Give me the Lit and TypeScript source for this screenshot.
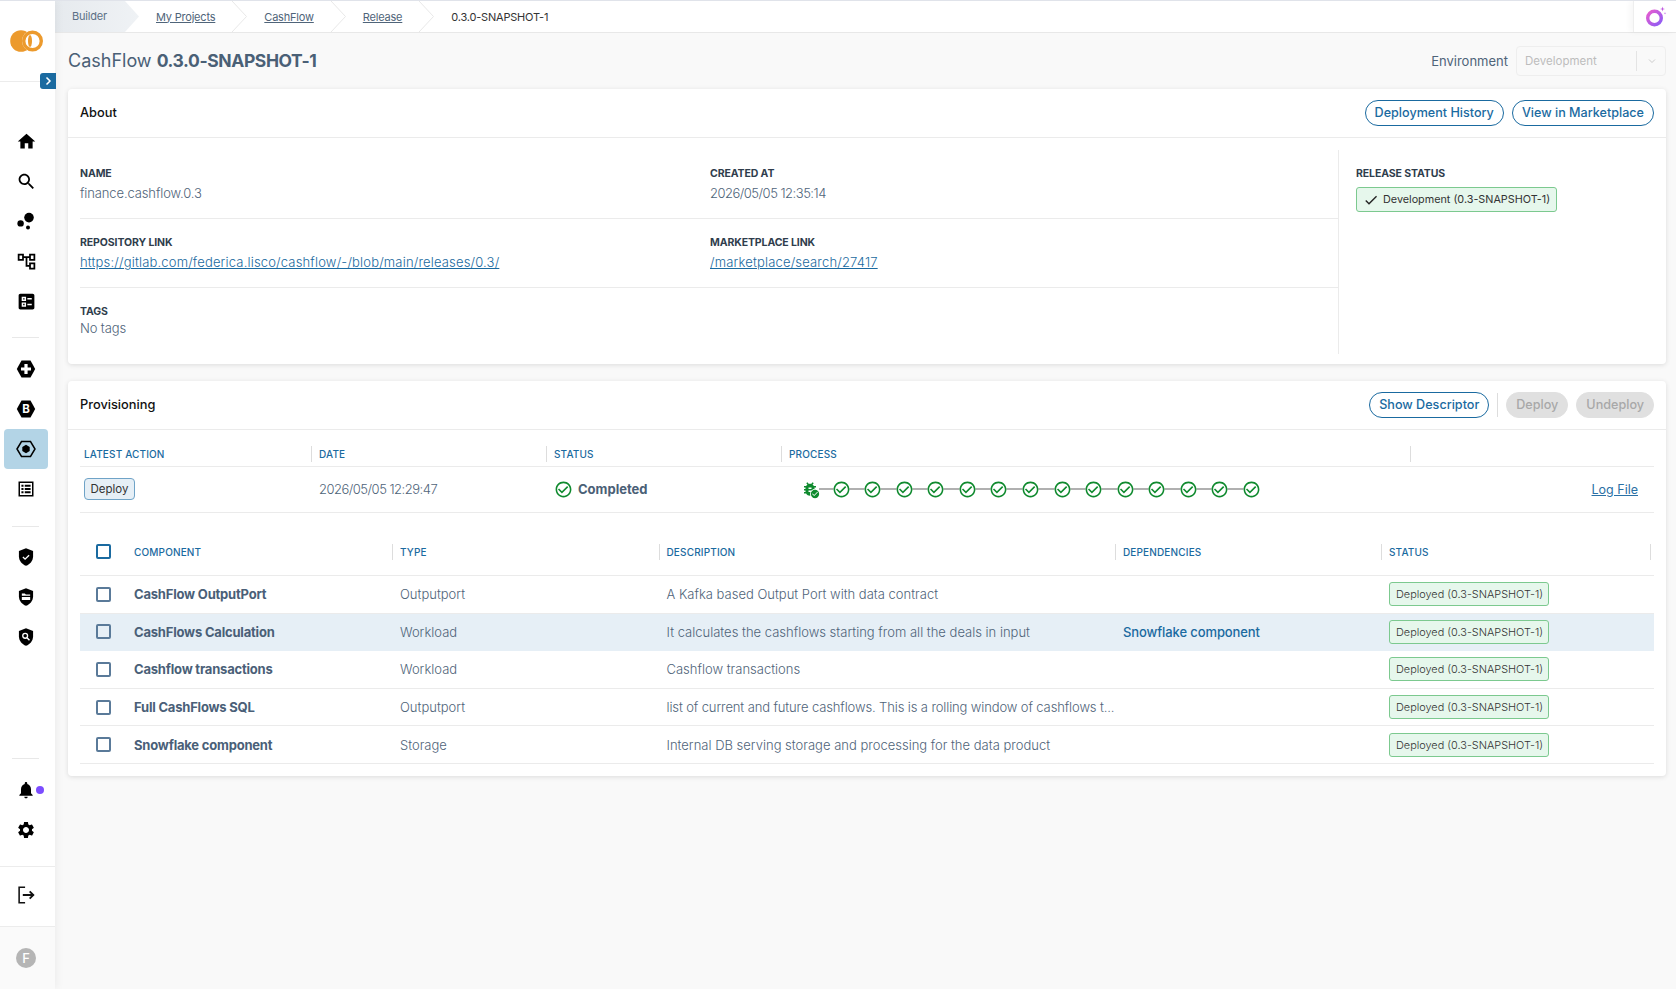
import { LitElement, html, css, svg } from 'lit';
import { customElement } from 'lit/decorators.js';

const CHECK_CIRCLE =
  'M16.59 7.58 10 14.17l-3.59-3.58L5 12l5 5 8-8zM12 2C6.48 2 2 6.48 2 12s4.48 10 10 10 10-4.48 10-10S17.52 2 12 2zm0 18c-4.42 0-8-3.58-8-8s3.58-8 8-8 8 3.58 8 8-3.58 8-8 8z';
const BUG =
  'M20 8h-2.81c-.45-.78-1.07-1.45-1.82-1.96L17 4.41 15.59 3l-2.17 2.17C12.96 5.06 12.49 5 12 5c-.49 0-.96.06-1.41.17L8.41 3 7 4.41l1.62 1.63C7.88 6.55 7.26 7.22 6.81 8H4v2h2.09c-.05.33-.09.66-.09 1v1H4v2h2v1c0 .34.04.67.09 1H4v2h2.81c1.04 1.79 2.97 3 5.19 3s4.15-1.21 5.19-3H20v-2h-2.09c.05-.33.09-.66.09-1v-1h2v-2h-2v-1c0-.34-.04-.67-.09-1H20V8zm-6 8h-4v-2h4v2zm0-4h-4v-2h4v2z';
const SHIELD = 'M12 1.5 3.5 4.8v6.4c0 5.2 3.6 10 8.5 11.3 4.9-1.3 8.5-6.1 8.5-11.3V4.8z';
const HEX = '2.8,12 7.5,3.6 16.5,3.6 21.2,12 16.5,20.4 7.5,20.4';

const icon = (body: unknown, size = 24) =>
  html`<svg width=${size} height=${size} viewBox="0 0 24 24" fill="currentColor">${body}</svg>`;

const NAV_TOP = [
  { size: 21, body: svg`<path d="M10 20v-6h4v6h5v-8h3L12 3 2 12h3v8z"/>` },
  { size: 21, body: svg`<path d="M15.5 14h-.79l-.28-.27C15.41 12.59 16 11.11 16 9.5 16 5.91 13.09 3 9.5 3S3 5.91 3 9.5 5.91 16 9.5 16c1.61 0 3.09-.59 4.23-1.57l.27.28v.79l5 4.99L20.49 19l-4.99-5zm-6 0C7.01 14 5 11.99 5 9.5S7.01 5 9.5 5 14 7.01 14 9.5 11.99 14 9.5 14z"/>` },
  { size: 24, body: svg`<circle cx="6.6" cy="14.4" r="3.2"/><circle cx="14" cy="18.4" r="2"/><circle cx="15" cy="8.6" r="4.8"/>` },
  { size: 21, body: svg`<path d="M22 11V3h-7v3H9V3H2v8h7V8h2v10h4v3h7v-8h-7v3h-2V8h2v3h7zM7 9H4V5h3v4zm10 6h3v4h-3v-4zm0-10h3v4h-3V5z"/>` },
  { size: 21, body: svg`<path fill-rule="evenodd" d="M5 3h14c1.1 0 2 .9 2 2v14c0 1.1-.9 2-2 2H5c-1.100 0-2-.9-2-2V5c0-1.100.9-2 2-2zm1.500 3.500v5h5v-5zm1.700 1.700h1.600v1.600H8.200zM6.500 13v5h5v-5zm1.700 1.700h1.600v1.600H8.200zM13 8v1.700h5V8zm0 6.500v1.700h5v-1.700z"/>` },
];

const NAV_MID = [
  { size: 24, body: svg`<polygon points=${HEX}/><path fill="#fff" d="M10.400 7h3.200v3.400H17v3.200h-3.400V17h-3.200v-3.400H7v-3.200h3.400z"/>` },
  { size: 24, body: svg`<polygon points=${HEX}/><text x="12" y="16" text-anchor="middle" font-size="11.500" font-weight="700" fill="#fff" font-family="Inter, sans-serif">B</text>` },
  { size: 24, body: svg`<polygon points="3,12 7.500,4.600 16.500,4.600 21,12 16.500,19.400 7.500,19.400" fill="none" stroke="currentColor" stroke-width="1.500"/><polygon points="12,7.800 15.700,9.900 15.700,14.100 12,16.200 8.300,14.100 8.300,9.900"/>` },
  { size: 20, body: svg`<path fill-rule="evenodd" d="M3 3h18v18H3zm1.800 1.800v14.400h14.400V4.800zM6.500 7h2.500v2.300H6.500zm4 0h7v2.300h-7zm-4 3.900h2.500v2.300H6.500zm4 0h7v2.300h-7zm-4 3.900h2.500V17H6.500zm4 0h7V17h-7z"/>` },
];

const NAV_SHIELDS = [
  svg`<path d=${SHIELD}/><path d="m8.300 12 2.600 2.600 4.800-4.800" fill="none" stroke="#fff" stroke-width="1.600"/>`,
  svg`<path d=${SHIELD}/><path fill="#fff" d="M7 7.800h3.600l1.200 1.300H17v1.300H7zM7 12h10v3.600H7z"/>`,
  svg`<path d=${SHIELD}/><circle cx="11" cy="10.600" r="2.900" fill="none" stroke="#fff" stroke-width="1.600"/><path d="m13.200 12.800 3 3" stroke="#fff" stroke-width="1.800"/>`,
];

const CRUMBS = ['My Projects', 'CashFlow', 'Release'];

const COMPONENTS = [
  { name: 'CashFlow OutputPort', type: 'Outputport', desc: 'A Kafka based Output Port with data contract', dep: '' },
  { name: 'CashFlows Calculation', type: 'Workload', desc: 'It calculates the cashflows starting from all the deals in input', dep: 'Snowflake component', active: true },
  { name: 'Cashflow transactions', type: 'Workload', desc: 'Cashflow transactions', dep: '' },
  { name: 'Full CashFlows SQL', type: 'Outputport', desc: 'list of current and future cashflows. This is a rolling window of cashflows t...', dep: '', long: true },
  { name: 'Snowflake component', type: 'Storage', desc: 'Internal DB serving storage and processing for the data product', dep: '' },
];

@customElement('app-root')
export class AppRoot extends LitElement {
  static styles = css`
    :host {
      display: flex;
      height: 989px;
      overflow: hidden;
      box-sizing: border-box;
      border-top: 1px solid #e0e3ea;
      background: #f9f9f9;
      font-family: Inter, 'Noto Sans', sans-serif;
      font-size: 13px;
      color: #4f6479;
    }
    * {
      box-sizing: border-box;
    }
    a {
      color: inherit;
    }
    svg {
      display: block;
      flex: none;
    }

    /* sidebar */
    .side {
      position: relative;
      z-index: 2;
      flex: 0 0 55px;
      display: flex;
      flex-direction: column;
      background: #fff;
      box-shadow: 2px 0 8px rgba(0, 0, 0, 0.05);
      color: #000;
    }
    .logo {
      height: 81px;
      flex: none;
      display: flex;
      align-items: center;
      padding: 0 0 0 10px;
      border-bottom: 1px solid #ececec;
    }
    .expand {
      position: absolute;
      top: 72px;
      left: 40px;
      width: 16px;
      height: 16px;
      border-radius: 3px 0 0 3px;
      background: #1a6aa0;
      display: flex;
      align-items: center;
      justify-content: center;
    }
    .nav-list {
      padding-top: 39px;
    }
    .nav {
      width: 44px;
      height: 40px;
      margin-left: 4px;
      border-radius: 4px;
      display: flex;
      align-items: center;
      justify-content: center;
    }
    .nav.on {
      background: #b3d4e6;
    }
    .sep {
      height: 1px;
      width: 27px;
      margin-left: 12px;
      background: #e8e8e8;
    }
    .sep.a {
      margin-top: 16px;
      margin-bottom: 11px;
    }
    .sep.b {
      margin-top: 17px;
      margin-bottom: 10px;
    }
    .sep.c {
      margin-bottom: 11px;
    }
    .side-bottom {
      margin-top: auto;
    }
    .bell {
      position: relative;
    }
    .dot {
      position: absolute;
      left: 32px;
      top: 16px;
      width: 8px;
      height: 8px;
      border-radius: 50%;
      background: #7c4dff;
    }
    .logout {
      height: 61px;
      margin-top: 16px;
      border-top: 1px solid #ececec;
      border-bottom: 1px solid #ececec;
      display: flex;
      align-items: center;
      justify-content: center;
      padding: 0 3px 4px 0;
    }
    .foot {
      height: 62px;
      background: #fafafa;
      display: flex;
      align-items: center;
      justify-content: center;
      padding-right: 3px;
    }
    .avatar {
      width: 20px;
      height: 20px;
      border-radius: 50%;
      background: #b5b5b5;
      color: #fff;
      font-size: 13px;
      font-weight: 500;
      line-height: 20px;
      text-align: center;
    }

    /* breadcrumb */
    .main {
      flex: 1;
      min-width: 0;
    }
    .crumbs {
      height: 32px;
      background: #fff;
      border-bottom: 1px solid #e8e8e8;
      display: flex;
      align-items: center;
      font-size: 11px;
      letter-spacing: -0.2px;
    }
    .crumb-first {
      width: 84px;
      height: 100%;
      padding: 0 0 0 17px;
      line-height: 31px;
      background: linear-gradient(90deg, #e6eaee, #eff2f5);
      clip-path: polygon(0 0, 70px 0, 84px 50%, 70px 100%, 0 100%);
      color: #5b7086;
    }
    .crumb {
      padding: 0 17px;
      white-space: nowrap;
    }
    .crumb.last {
      color: #333;
    }
    .ai {
      margin-left: auto;
      width: 43px;
      height: 100%;
      border-left: 1px solid #eee;
      box-shadow: -3px 0 6px rgba(0, 0, 0, 0.04);
      display: flex;
      align-items: center;
      justify-content: center;
    }

    /* content */
    .content {
      padding: 0 10px 0 13px;
    }
    .title-row {
      height: 56px;
      display: flex;
      align-items: center;
    }
    h1 {
      margin: 0 0 2px;
      font-size: 18px;
      font-weight: 400;
      color: #4a6076;
    }
    h1 b {
      font-size: 17.500px;
      font-weight: 700;
      letter-spacing: -0.4px;
    }
    .env {
      margin-left: auto;
      display: flex;
      align-items: center;
      gap: 8px;
      font-size: 13px;
    }
    .select {
      width: 150px;
      height: 30px;
      border: 1px solid #eee;
      border-radius: 4px;
      display: flex;
      align-items: center;
      padding-left: 8px;
      font-size: 11.500px;
      color: #bdbdbd;
    }
    .select span {
      flex: 1;
    }
    .select i {
      width: 1px;
      height: 20px;
      background: #e4e4e4;
    }
    .select svg {
      margin: 0 8px 0 10px;
    }
    .card {
      background: #fff;
      border-radius: 4px;
      box-shadow: 0 1px 5px rgba(0, 0, 0, 0.12);
      margin-bottom: 17px;
    }
    .card-head {
      height: 49px;
      padding: 0 12px 1px;
      border-bottom: 1px solid #ebebeb;
      display: flex;
      align-items: center;
      gap: 8px;
      color: #111;
      font-size: 12.800px;
      font-weight: 500;
    }
    .card-head .spacer {
      flex: 1;
    }
    .btn {
      height: 26px;
      padding: 0 9px;
      border: 1px solid #1a6aa0;
      border-radius: 13px;
      color: #1a6aa0;
      font-size: 12.600px;
      font-weight: 500;
      line-height: 24px;
      white-space: nowrap;
    }
    .btn.off {
      border-color: #e0e0e0;
      background: #e0e0e0;
      color: #a8a8a8;
    }
    .vbar {
      width: 1px;
      height: 24px;
      background: #ddd;
    }

    /* about */
    .about {
      display: grid;
      grid-template-columns: 1259px 1fr;
      padding: 12px 12px 10px;
    }
    .about-left {
      border-right: 1px solid #ebebeb;
    }
    .about-row {
      height: 69px;
      display: grid;
      grid-template-columns: 630px 1fr;
      padding-top: 16px;
      border-bottom: 1px solid #ebebeb;
    }
    .about-row.last {
      height: 66px;
      border-bottom: 0;
    }
    .label {
      font-size: 10.500px;
      line-height: 16px;
      font-weight: 700;
      letter-spacing: -0.1px;
      color: #2f3d4c;
    }
    .value {
      margin-top: 1px;
      line-height: 20px;
      font-weight: 300;
      letter-spacing: -0.12px;
    }
    .value.date-val {
      letter-spacing: -0.5px;
    }
    .about-row.last .value {
      margin-top: -2px;
    }
    .value a {
      color: #1a6aa0;
      letter-spacing: 0.17px;
    }
    .about-right {
      padding: 16px 0 0 17px;
    }
    .status-chip {
      display: flex;
      align-items: center;
      gap: 4px;
      margin-top: 5px;
      height: 25px;
      width: 201px;
      padding-left: 6px;
      border: 1px solid #7cc98f;
      border-radius: 3px;
      background: #e6f7ec;
      color: #333;
      font-size: 10.800px;
      white-space: nowrap;
    }

    /* tables */
    .prov {
      padding: 0 12px 12px;
    }
    .t1 {
      display: grid;
      grid-template-columns: 231px 235px 235px 629px 244px;
      align-items: center;
    }
    .t1.h {
      height: 37px;
      padding-top: 11px;
      border-bottom: 1px solid #ebebeb;
    }
    .t1.r {
      height: 46px;
      padding-bottom: 1px;
      border-bottom: 1px solid #ebebeb;
    }
    .hc {
      height: 16px;
      line-height: 16px;
      padding-left: 7px;
      border-left: 1px solid #ddd;
      color: #1a6aa0;
      font-size: 10px;
      font-weight: 500;
      letter-spacing: 0.15px;
    }
    .hc.first {
      padding-left: 4px;
      border-left: 0;
    }
    .action {
      margin-left: 4px;
      width: 51px;
      height: 22px;
      border: 1px solid #6fa3c7;
      border-radius: 4px;
      background: #e6eff6;
      color: #333;
      font-size: 11.500px;
      line-height: 20px;
      text-align: center;
    }
    .done {
      display: flex;
      align-items: center;
      gap: 5px;
      padding-left: 8px;
      font-weight: 700;
      color: #4a6076;
    }
    .date {
      padding-left: 8px;
      font-weight: 300;
      letter-spacing: -0.5px;
    }
    .process {
      display: flex;
      align-items: center;
      justify-content: space-between;
      width: 460px;
      margin-left: 20px;
      position: relative;
    }
    .process::before {
      content: '';
      position: absolute;
      left: 18px;
      right: 8px;
      top: 50%;
      height: 2px;
      margin-top: -1px;
      background: #b0b0b0;
    }
    .process svg {
      position: relative;
    }
    .bug {
      position: relative;
      width: 18px;
      height: 18px;
    }
    .bug svg + svg {
      position: absolute;
      right: -1px;
      bottom: -1px;
      background: #fff;
      border-radius: 50%;
    }
    .log {
      text-align: right;
      padding-right: 16px;
      font-size: 12.500px;
      color: #2a70a5;
    }
    .t2 {
      display: grid;
      grid-template-columns: 312px 266.500px 456.500px 266px 273px;
      align-items: center;
    }
    .t2.h {
      height: 48px;
      margin-top: 15px;
      border-bottom: 1px solid #ebebeb;
    }
    .t2.r {
      height: 37.600px;
      border-bottom: 1px solid #ebebeb;
      font-weight: 300;
    }
    .t2.r.active {
      background: #e6eff6;
      border-bottom-color: #e6eff6;
    }
    .t2 .name {
      display: flex;
      align-items: center;
      gap: 23px;
      padding-left: 16px;
    }
    .t2 .name b {
      font-weight: 700;
      letter-spacing: -0.2px;
      color: #4a5f78;
    }
    .hc.name {
      height: auto;
      padding-left: 16px;
      border-left: 0;
    }
    .hc.end {
      margin-right: 3px;
      border-right: 1px solid #ddd;
    }
    .box {
      flex: none;
      width: 15px;
      height: 15px;
      border: 2px solid #5a7a99;
      border-radius: 2px;
    }
    .box.head {
      border-color: #1a6aa0;
    }
    .cell {
      padding-left: 8px;
      white-space: nowrap;
    }
    .cell.long {
      letter-spacing: -0.12px;
    }
    .cell.dep {
      color: #1a6aa0;
      font-weight: 500;
      letter-spacing: -0.1px;
    }
    .chip {
      margin-left: 8px;
      width: 160px;
      height: 24px;
      border: 1px solid #7cc98f;
      border-radius: 3px;
      background: #e6f7ec;
      color: #333;
      font-size: 10.900px;
      line-height: 22px;
      padding-left: 6px;
      white-space: nowrap;
    }
  `;

  renderLogo() {
    return html`<svg width="34" height="24" viewBox="0 0 34 24">
      <circle cx="11" cy="12" r="10.800" fill="#ec9a2d" />
      <circle cx="22.500" cy="12" r="10.500" fill="#fff" />
      <circle cx="22.500" cy="12" r="8.800" fill="none" stroke="#ec9a2d" stroke-width="3.400" />
      <ellipse cx="20" cy="12" rx="2" ry="6" fill="#ec9a2d" />
    </svg>`;
  }

  renderSide() {
    return html`<aside class="side">
      <div class="logo">${this.renderLogo()}</div>
      <div class="expand">
        <svg width="10" height="10" viewBox="0 0 10 10" fill="none" stroke="#fff" stroke-width="1.500">
          <path d="m3.500 1.500 3.500 3.500-3.500 3.500" />
        </svg>
      </div>
      <div class="nav-list">
        ${NAV_TOP.map((i) => html`<div class="nav">${icon(i.body, i.size)}</div>`)}
        <div class="sep a"></div>
        ${NAV_MID.map((i, n) => html`<div class="nav ${n === 2 ? 'on' : ''}">${icon(i.body, i.size)}</div>`)}
        <div class="sep b"></div>
        ${NAV_SHIELDS.map((i) => html`<div class="nav">${icon(i, 20)}</div>`)}
      </div>
      <div class="side-bottom">
        <div class="sep c"></div>
        <div class="nav bell">
          ${icon(svg`<path d="M12 22c1.100 0 2-.9 2-2h-4c0 1.100.89 2 2 2zm6-6v-5c0-3.070-1.640-5.640-4.500-6.320V4c0-.83-.67-1.500-1.500-1.500s-1.500.67-1.500 1.500v.68C7.630 5.360 6 7.920 6 11v5l-2 2v1h16v-1l-2-2z"/>`, 20)}
          <span class="dot"></span>
        </div>
        <div class="nav">
          ${icon(svg`<path d="M19.140 12.940c.04-.3.06-.61.06-.94 0-.32-.02-.64-.07-.94l2.030-1.580c.18-.14.23-.41.12-.61l-1.920-3.320c-.12-.22-.37-.29-.59-.22l-2.390.96c-.5-.38-1.030-.7-1.620-.94l-.36-2.540c-.04-.24-.24-.41-.48-.41h-3.840c-.24 0-.43.17-.47.41l-.36 2.540c-.59.24-1.130.57-1.620.94l-2.390-.96c-.22-.08-.47 0-.59.22L2.740 8.870c-.12.21-.08.47.12.61l2.030 1.580c-.05.3-.09.63-.09.94s.02.64.07.94l-2.030 1.580c-.18.14-.23.41-.12.61l1.920 3.320c.12.22.37.29.59.22l2.390-.96c.5.38 1.030.7 1.620.94l.36 2.540c.05.24.24.41.48.41h3.840c.24 0 .44-.17.47-.41l.36-2.540c.59-.24 1.130-.56 1.620-.94l2.390.96c.22.08.47 0 .59-.22l1.920-3.320c.12-.22.07-.47-.12-.61l-2.010-1.580zM12 15.600c-1.980 0-3.600-1.620-3.600-3.600s1.620-3.600 3.600-3.600 3.600 1.620 3.600 3.600-1.620 3.600-3.600 3.600z"/>`, 20)}
        </div>
        <div class="logout">
          <svg width="22" height="22" viewBox="0 0 24 24" fill="none" stroke="#111" stroke-width="1.700">
            <path d="M11 3.500H4.500v17H11" />
            <path d="M8.500 12H20" stroke-width="2.200" />
            <path d="m16 8 4 4-4 4" stroke-width="2" />
          </svg>
        </div>
        <div class="foot"><div class="avatar">F</div></div>
      </div>
    </aside>`;
  }

  renderCrumbs() {
    const chev = html`<svg width="15" height="31" viewBox="0 0 15 31" fill="none" stroke="#e8e8e8">
      <path d="M0 0 14.500 15.500 0 31" />
    </svg>`;
    return html`<nav class="crumbs">
      <div class="crumb-first">Builder</div>
      ${CRUMBS.map((c) => html`<div class="crumb"><a href="#">${c}</a></div>${chev}`)}
      <div class="crumb last">0.3.0-SNAPSHOT-1</div>
      <div class="ai">
        <svg width="24" height="24" viewBox="0 0 24 24">
          <defs>
            <linearGradient id="ring" x1="0" y1="0" x2="1" y2="1">
              <stop offset="0" stop-color="#e85ccf" />
              <stop offset="1" stop-color="#8b5cf6" />
            </linearGradient>
          </defs>
          <circle cx="11.500" cy="13" r="6.800" fill="none" stroke="url(#ring)" stroke-width="3.400" />
          <path fill="#c15be0" d="M19.500 1.500l.6 1.900 1.900.6-1.900.6-.6 1.900-.6-1.900-1.900-.6 1.900-.6zM22 7l.3.9.9.3-.9.3-.3.9-.3-.9-.9-.3.9-.3z" />
        </svg>
      </div>
    </nav>`;
  }

  renderAbout() {
    return html`<section class="card">
      <div class="card-head">
        About<span class="spacer"></span>
        <span class="btn">Deployment History</span>
        <span class="btn">View in Marketplace</span>
      </div>
      <div class="about">
        <div class="about-left">
          <div class="about-row">
            <div>
              <div class="label">NAME</div>
              <div class="value">finance.cashflow.0.3</div>
            </div>
            <div>
              <div class="label">CREATED AT</div>
              <div class="value date-val">2026/05/05 12:35:14</div>
            </div>
          </div>
          <div class="about-row">
            <div>
              <div class="label">REPOSITORY LINK</div>
              <div class="value"><a href="#">https://gitlab.com/federica.lisco/cashflow/-/blob/main/releases/0.3/</a></div>
            </div>
            <div>
              <div class="label">MARKETPLACE LINK</div>
              <div class="value"><a href="#">/marketplace/search/27417</a></div>
            </div>
          </div>
          <div class="about-row last">
            <div>
              <div class="label">TAGS</div>
              <div class="value">No tags</div>
            </div>
          </div>
        </div>
        <div class="about-right">
          <div class="label">RELEASE STATUS</div>
          <div class="status-chip">
            <svg width="16" height="16" viewBox="0 0 24 24" fill="#222">
              <path d="M9 16.170 4.830 12l-1.420 1.410L9 19 21 7l-1.410-1.410z" />
            </svg>
            Development (0.3-SNAPSHOT-1)
          </div>
        </div>
      </div>
    </section>`;
  }

  renderProcess() {
    const steps = Array.from({ length: 14 });
    return html`<div class="process">
      <div class="bug">
        <svg width="18" height="18" viewBox="0 0 24 24" fill="#0f8a2e"><path d=${BUG} /></svg>
        <svg width="10" height="10" viewBox="0 0 24 24" fill="#0f8a2e"><path d="M12 2a10 10 0 1 0 0 20 10 10 0 0 0 0-20zm-2 15-5-5 1.400-1.400L10 14.200l7.600-7.600L19 8z" /></svg>
      </div>
      ${steps.map(
        () => html`<svg width="19" height="19" viewBox="0 0 24 24" fill="#0f8a2e">
          <circle cx="12" cy="12" r="10" fill="#fff" />
          <path d=${CHECK_CIRCLE} />
        </svg>`
      )}
    </div>`;
  }

  renderProvisioning() {
    return html`<section class="card">
      <div class="card-head">
        Provisioning<span class="spacer"></span>
        <span class="btn">Show Descriptor</span>
        <span class="vbar"></span>
        <span class="btn off">Deploy</span>
        <span class="btn off">Undeploy</span>
      </div>
      <div class="prov">
        <div class="t1 h">
          <div class="hc first">LATEST ACTION</div>
          <div class="hc">DATE</div>
          <div class="hc">STATUS</div>
          <div class="hc">PROCESS</div>
          <div class="hc"></div>
        </div>
        <div class="t1 r">
          <div class="action">Deploy</div>
          <div class="date">2026/05/05 12:29:47</div>
          <div class="done">
            <svg width="19" height="19" viewBox="0 0 24 24" fill="#0f8a2e"><path d=${CHECK_CIRCLE} /></svg>
            Completed
          </div>
          ${this.renderProcess()}
          <div class="log"><a href="#">Log File</a></div>
        </div>
        <div class="t2 h">
          <div class="hc name"><span class="box head"></span>COMPONENT</div>
          <div class="hc">TYPE</div>
          <div class="hc">DESCRIPTION</div>
          <div class="hc">DEPENDENCIES</div>
          <div class="hc end">STATUS</div>
        </div>
        ${COMPONENTS.map(
          (c) => html`<div class="t2 r ${c.active ? 'active' : ''}">
            <div class="name"><span class="box"></span><b>${c.name}</b></div>
            <div class="cell">${c.type}</div>
            <div class="cell ${c.long ? 'long' : ''}">${c.desc}</div>
            <div class="cell dep">${c.dep}</div>
            <div class="chip">Deployed (0.3-SNAPSHOT-1)</div>
          </div>`
        )}
      </div>
    </section>`;
  }

  render() {
    return html`${this.renderSide()}
      <div class="main">
        ${this.renderCrumbs()}
        <div class="content">
          <div class="title-row">
            <h1>CashFlow <b>0.3.0-SNAPSHOT-1</b></h1>
            <div class="env">
              Environment
              <div class="select">
                <span>Development</span><i></i>
                <svg width="10" height="10" viewBox="0 0 10 10" fill="none" stroke="#ccc"><path d="m2 3.500 3 3 3-3" /></svg>
              </div>
            </div>
          </div>
          ${this.renderAbout()} ${this.renderProvisioning()}
        </div>
      </div>`;
  }
}
